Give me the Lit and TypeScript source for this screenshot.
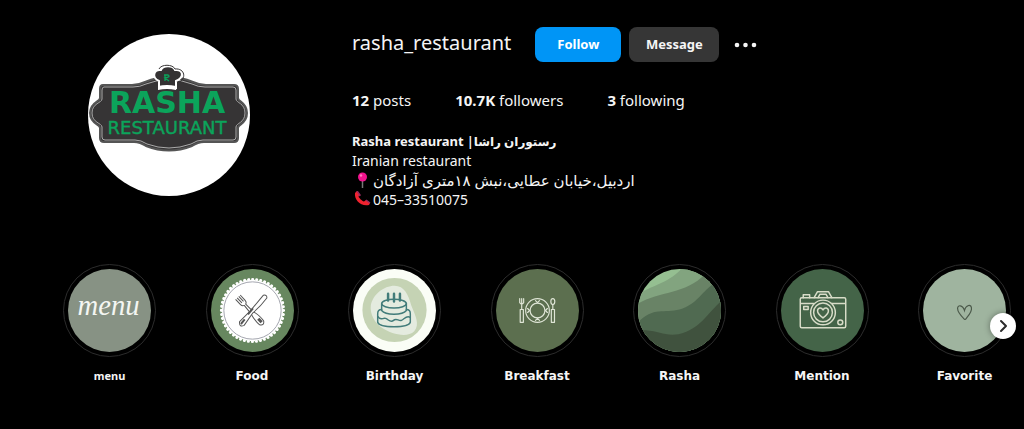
import { LitElement, html, svg, css } from "lit";
import { customElement, property } from "lit/decorators.js";

const food = svg`
  <rect width="84" height="84" fill="#67875f"/>
  <circle cx="42" cy="42" r="31" fill="#fff"/>
  <circle cx="42" cy="42" r="31.5" fill="none" stroke="#fff" stroke-width="3" stroke-linecap="round" stroke-dasharray="0.1 4.02"/>
  <circle cx="42" cy="42" r="29" fill="none" stroke="#a3a5ae" stroke-width="1"/>
  <g transform="translate(41 43) rotate(-43)" stroke="#555" stroke-width="1" fill="#fff" stroke-linejoin="round">
    <path d="M-3.4-20v7q0 3 2.200 3.500l-.6 10q-2.400 9-1.400 15 2.800 4 5.600 0 1.200-6-1.300-15l-.3-10q2.200-.6 2.200-3.500v-7M-1.200-20v7M1-20v7"/>
    <path d="M0 10v5" stroke-width="3"/>
  </g>
  <g transform="translate(42 42) rotate(40)" stroke="#555" stroke-width="1" fill="#fff" stroke-linejoin="round">
    <path d="M-1.500 2V-19q2.500-3 4.500 0 .6 10-1.200 21l1.400 15q-2.600 5-6 0z"/>
    <path d="M-.2 12v6M-1-2v8" stroke-width="2"/>
  </g>`;

const birthday = svg`
  <rect width="84" height="84" fill="#fafdf6"/>
  <circle cx="42" cy="41.500" r="32.500" fill="#c5d3b4"/>
  <path d="M42 17c10 0 14 9 17 20 4 10 9 19 3 26-7 7-23 3-32-3-8-5-13-14-12-23 2-11 13-20 24-20z" fill="#e4ebdf"/>
  <g fill="none" stroke="#427c7a" stroke-width="1.500" stroke-linejoin="round" stroke-linecap="round">
    <ellipse cx="41.500" cy="35" rx="12.500" ry="4.500"/>
    <path d="M29 35v7c4 5 21 5 25 0v-7"/>
    <path d="M29 41q-4 0-4 4v9c2 6 31 6 33 0v-9q0-4-4-4"/>
    <path d="M25 48c3 5 5 1 8 2s5 5 8 2 5 1 8 0 5-6 9-3"/>
    <path d="M35.500 25v7M41.500 25v8M47.500 25v7" stroke-width="2.500"/>
  </g>`;

const breakfast = svg`
  <rect width="84" height="84" fill="#5c6f4f"/>
  <g fill="none" stroke="#dfe5d6" stroke-width="1.200" stroke-linecap="round" stroke-linejoin="round">
    <circle cx="42" cy="42" r="12"/>
    <circle cx="42" cy="42" r="7.500"/>
    <path d="M40 32l2 2 2-2M40 52l2-2 2 2M32 40l2 2-2 2M52 40l-2 2 2 2"/>
    <path d="M24 30v4q2 3 4 0v-4M26 30v11M24.500 41h3.200v13h-3.200z"/>
    <ellipse cx="57.500" cy="33" rx="2" ry="3"/>
    <path d="M57.500 36v5M56 41h3.200v13h-3.200z"/>
  </g>`;

const rasha = svg`
  <rect width="84" height="84" fill="#95bf91"/>
  <path d="M0 26C14 16 28 16 44 0H84V84H0z" fill="#82a47f"/>
  <path d="M0 35C22 22 48 26 68 5L84 0V84H0z" fill="#698366"/>
  <path d="M0 54C15 38 27 45 42 41 60 36 65 22 78 14L84 0V84H0z" fill="#506a51"/>
  <path d="M0 62H8C22 63 27 68 41 66 62 62 71 44 84 33V84H0z" fill="#40523e"/>`;

const mention = svg`
  <rect width="84" height="84" fill="#446448"/>
  <g fill="none" stroke="#d8dcc8" stroke-width="1.500" stroke-linejoin="round" stroke-linecap="round">
    <rect x="19.500" y="29" width="46" height="30.500" rx="1.500"/>
    <path d="M20 35h13M51 35h14M22.500 29v-3h6.500v3M33.500 29l3.500-6h11l3.500 6M37.500 29l2-3.500h6l2 3.500"/>
    <rect x="23" y="38" width="4.500" height="3"/>
    <circle cx="42.500" cy="44" r="12.500" fill="#446448"/>
    <circle cx="42.500" cy="44" r="9.500"/>
    <path d="M42.500 49.500c-3-2.300-5.500-4.500-5.500-7 0-3.500 4-4 5.500-1 1.500-3 5.500-2.500 5.500 1 0 2.500-2.500 4.700-5.500 7z"/>
    <circle cx="60" cy="54" r="2.500"/>
  </g>`;

const favorite = svg`
  <rect width="84" height="84" fill="#9fb49f"/>
  <path d="M42 51C38 47 35 43 35 40c0-4 5-4 7 2 1-5 6-7 7-3 1 4-3 8-6 12" fill="none" stroke="#4b594a" stroke-width="1.200" stroke-linecap="round"/>`;

const menu = svg`
  <rect width="84" height="84" fill="#879284"/>
  <text class="script" x="41" y="47" text-anchor="middle">menu</text>`;

const HIGHLIGHTS = [
  { label: "menu", art: menu, narrow: true },
  { label: "Food", art: food },
  { label: "Birthday", art: birthday },
  { label: "Breakfast", art: breakfast },
  { label: "Rasha", art: rasha },
  { label: "Mention", art: mention },
  { label: "Favorite", art: favorite },
];

@customElement("story-highlight")
class StoryHighlight extends LitElement {
  @property() label = "";
  @property({ attribute: false }) art: unknown;
  @property({ type: Boolean }) narrow = false;

  static styles = css`
    :host { display: block; flex: none; width: 93px; }
    .link { display: flex; flex-direction: column; align-items: center; gap: 11px; color: #f5f5f5; text-decoration: none; }
    .ring { box-sizing: border-box; width: 93px; height: 93px; padding: 4px; border: 1px solid #2c2c2c; border-radius: 50%; }
    .art { display: block; width: 83px; height: 83px; border-radius: 50%; }
    .script { font: italic 29px "Liberation Serif", serif; fill: #f4f6f2; }
    .label { font: bold 12px/16px "DejaVu Sans", sans-serif; white-space: nowrap; }
    .narrow { font: bold 11px/16px "Noto Sans", sans-serif; }
  `;

  render() {
    return html`<a class="link" href="#">
      <span class="ring"><svg class="art" viewBox="0 0 84 84" aria-hidden="true">${this.art}</svg></span>
      <span class="label ${this.narrow ? "narrow" : ""}">${this.label}</span>
    </a>`;
  }
}

@customElement("app-root")
class AppRoot extends LitElement {
  static styles = css`
    :host { display: block; min-height: 100vh; background: #000; color: #f5f5f5; font-family: "Noto Sans", "DejaVu Sans", sans-serif; overflow: hidden; }
    .profile { display: flex; gap: 102px; padding: 27px 88px 0; }
    .avatar { flex: none; width: 162px; height: 162px; margin-top: 7px; border-radius: 50%; }
    .info { flex: 1; min-width: 0; }
    .top { display: flex; align-items: center; gap: 8px; }
    .name { margin: 0 16px 4px 0; font-size: 20px; line-height: 28px; font-weight: 400; }
    .btn { min-width: 90px; height: 35px; padding: 0 16px 2px; border: 0; border-radius: 8px; background: #363636; color: #f5f5f5; font: bold 13px/18px "Noto Sans", sans-serif; }
    .primary { min-width: 86px; background: #0095f6; color: #fff; }
    .more { display: flex; padding: 0; margin-left: 6px; border: 0; background: none; color: #f5f5f5; }
    .stats { display: flex; gap: 44px; margin: 26px 0 0; padding: 0; list-style: none; font-size: 15px; line-height: 24px; }
    .bio { margin-top: 20px; font-size: 14px; line-height: 19px; }
    .bio p { margin: 0; }
    .bio .title { font-size: 13px; font-weight: bold; line-height: 19px; }
    .title span { font-size: 12px; }
    .row { display: flex; gap: 2px; align-items: center; }
    .address { font-size: 15px; line-height: 20px; }
    .emoji { flex: none; width: 19px; height: 17px; }
    .highlights { position: relative; display: flex; justify-content: space-between; margin-top: 55px; padding: 0 13px 0 63px; }
    .next { position: absolute; right: 8px; top: 49px; display: grid; place-items: center; width: 26px; height: 26px; padding: 0; border: 0; border-radius: 50%; background: #fff; box-shadow: 0 0 6px rgba(0, 0, 0, 0.4); }
    .logo-big { font: bold 30px "DejaVu Sans", sans-serif; fill: #0ba45b; }
    .logo-small { font: 18px "DejaVu Sans", sans-serif; fill: #0ba45b; stroke: #0ba45b; stroke-width: 0.4; }
  `;

  render() {
    return html`
      <header class="profile">
        <svg class="avatar" viewBox="0 0 162 162" role="img" aria-label="Rasha Restaurant logo">
          <rect width="162" height="162" fill="#fff"/>
          <path d="M15 51H44q7 0 13-3 24-10 48 0 6 3 13 3h28q4 0 4 4v9c0 4 9 4 9 15s-9 11-9 15v10q0 4-4 4h-30q-6 0-12 4-23 9-46 0-6-4-12-4H16q-4 0-4-4V94C12 90 2 90 2 79s10-11 10-15V55q0-4 3-4z" fill="#363435" stroke="#555" stroke-width="2"/>
          <path d="M16 53H45q7 0 13-3 23-9 46 0 6 3 13 3h28q3 0 3 3v9c0 4 9 4 9 14s-9 10-9 14v10q0 3-3 3h-30q-6 0-12 4-22 8-44 0-6-4-12-4H17q-3 0-3-3V93C14 89 4 89 4 79s10-10 10-14V56q0-3 2-3z" fill="none" stroke="#aaa" stroke-width="1"/>
          <path d="M71 54v-7c-8-4-5-12 2-11 2-5 12-5 14 0 8-1 10 7 1 11v7q-9-2-17 0z" fill="#343233" stroke="#fff" stroke-width="2"/>
          <path d="M70 52q9-2 18 0v4q-9-2-18 0z" fill="#fff"/>
          <path d="M71 35c2-5 14-5 16 0 10-1 12 10 3 14" fill="none" stroke="#363435" stroke-width="1"/>
          <path d="M76 41h4q3 2-3 3l4 3M77 41v6" fill="none" stroke="#0ba45b" stroke-width="1.300"/>
          <text class="logo-big" x="79" y="79" text-anchor="middle">RASHA</text>
          <text class="logo-small" x="79" y="100" text-anchor="middle">RESTAURANT</text>
        </svg>
        <div class="info">
          <div class="top">
            <h2 class="name">rasha_restaurant</h2>
            <button class="btn primary">Follow</button>
            <button class="btn">Message</button>
            <button class="more" aria-label="Options">
              <svg width="26" height="8" viewBox="0 0 26 8" fill="currentColor"><circle cx="4" cy="4" r="2.300"/><circle cx="12.500" cy="4" r="2.300"/><circle cx="21" cy="4" r="2.300"/></svg>
            </button>
          </div>
          <ul class="stats">
            <li><b>12</b> posts</li>
            <li><b>10.7K</b> followers</li>
            <li><b>3</b> following</li>
          </ul>
          <div class="bio">
            <p class="title">Rasha restaurant <span>|رستوران راشا</span></p>
            <p>Iranian restaurant</p>
            <p class="row address">
              <svg class="emoji" viewBox="0 0 19 17" role="img" aria-label="pin"><path d="M10.500 8v8" stroke="#777" stroke-width="1.500"/><circle cx="10.500" cy="5" r="4.500" fill="#f0128c"/><circle cx="9" cy="3.500" r="1.200" fill="#ff7cc0"/></svg>
              <span>اردبیل،خیابان عطایی،نبش ۱۸متری آزادگان</span>
            </p>
            <p class="row">
              <svg class="emoji" viewBox="0 0 19 17" role="img" aria-label="phone"><path d="M3 2C2 9 9 16 17 14l1-2-4-3-2 1.500C10 10 7 7 6.500 5.500L8 4 5 0z" fill="#f0232f"/><path d="M5 0l3 4-1.500 1M14 9l4 3" stroke="#9b2a63" stroke-width="1.500" fill="none"/></svg>
              <span>045–33510075</span>
            </p>
          </div>
        </div>
      </header>
      <nav class="highlights" aria-label="Highlights">
        ${HIGHLIGHTS.map((h) => html`<story-highlight .label=${h.label} .art=${h.art} .narrow=${!!h.narrow}></story-highlight>`)}
        <button class="next" aria-label="Next">
          <svg width="12" height="14" viewBox="0 0 12 14" fill="none" stroke="#2b2b2b" stroke-width="2" stroke-linecap="round" stroke-linejoin="round"><path d="M4 2l5 5-5 5"/></svg>
        </button>
      </nav>
    `;
  }
}
